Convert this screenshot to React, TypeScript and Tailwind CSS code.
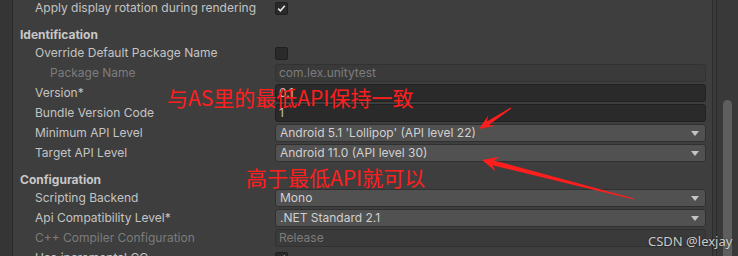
import React from 'react'

type Row =
  | { kind: 'header'; label: string }
  | { kind: 'check'; label: string; checked: boolean; indent?: boolean }
  | { kind: 'text'; label: string; value: string; dark?: boolean; disabled?: boolean; indent?: boolean }
  | { kind: 'select'; label: string; value: string; disabled?: boolean }

const rows: Row[] = [
  { kind: 'check', label: 'Apply display rotation during rendering', checked: true },
  { kind: 'header', label: 'Identification' },
  { kind: 'check', label: 'Override Default Package Name', checked: false },
  { kind: 'text', label: 'Package Name', value: 'com.lex.unitytest', disabled: true, indent: true },
  { kind: 'text', label: 'Version*', value: '0.1', dark: true },
  { kind: 'text', label: 'Bundle Version Code', value: '1', dark: true },
  { kind: 'select', label: 'Minimum API Level', value: "Android 5.1 'Lollipop' (API level 22)" },
  { kind: 'select', label: 'Target API Level', value: 'Android 11.0 (API level 30)' },
  { kind: 'header', label: 'Configuration' },
  { kind: 'select', label: 'Scripting Backend', value: 'Mono' },
  { kind: 'select', label: 'Api Compatibility Level*', value: '.NET Standard 2.1' },
  { kind: 'text', label: 'C++ Compiler Configuration', value: 'Release', disabled: true },
  { kind: 'check', label: 'Use incremental GC', checked: true },
]

const Checkbox = ({ checked }: { checked: boolean }) => (
  <div className="w-[13px] h-[13px] rounded-[2px] bg-[#2a2a2a] border border-[#1f1f1f] flex items-center justify-center">
    {checked && (
      <svg width="9" height="9" viewBox="0 0 9 9">
        <path d="M1.2 4.6 L3.4 6.8 L7.8 1.8" fill="none" stroke="#e8e8e8" strokeWidth="1.6" />
      </svg>
    )}
  </div>
)

// tapered arrow like a screenshot annotation tool
function arrow(tail: [number, number], tip: [number, number], headLen: number, headW: number, neckW: number) {
  const dx = tip[0] - tail[0]
  const dy = tip[1] - tail[1]
  const len = Math.hypot(dx, dy)
  const ux = dx / len
  const uy = dy / len
  const px = -uy
  const py = ux
  const at = (d: number, off: number) => [tip[0] - ux * d + px * off, tip[1] - uy * d + py * off]
  const neck = headLen * 0.72
  const pts = [
    [tail[0] + px * 0.6, tail[1] + py * 0.6],
    at(neck, neckW / 2),
    at(headLen, headW / 2),
    tip,
    at(headLen, -headW / 2),
    at(neck, -neckW / 2),
    [tail[0] - px * 0.6, tail[1] - py * 0.6],
  ]
  return pts.map(p => p.map(n => n.toFixed(1)).join(',')).join(' ')
}

export default function App() {
  return (
    <div className="relative w-[738px] h-[256px] overflow-hidden bg-[#3e3e3e] flex text-[12px] text-[#c4c4c4]" style={{ fontFamily: 'Inter, "Noto Sans", sans-serif' }}>
      <div className="w-[13px] shrink-0 bg-[#353535] border-r border-[#2a2a2a]" />

      <div className="w-[700px] shrink-0 border-r border-[#2c2c2c] pr-[6px]">
        <div className="-mt-[2px]">
          {rows.map((r, i) => {
            if (r.kind === 'header') {
              return (
                <div key={i} className="h-[25px] pt-[8px] pl-[7px]">
                  <div className="h-[17px] leading-[17px] font-bold text-[#c8c8c8]">{r.label}</div>
                </div>
              )
            }
            const disabled = (r.kind === 'text' || r.kind === 'select') && r.disabled
            const indent = (r.kind === 'text' || r.kind === 'check') && r.indent
            return (
              <div key={i} className="h-[20px] flex items-center">
                <div className={`w-[262px] shrink-0 whitespace-nowrap ${indent ? 'pl-[37px]' : 'pl-[22px]'} ${disabled ? 'text-[#7c7c7c]' : ''}`}>
                  {r.label}
                </div>
                <div className="flex-1 flex items-center">
                  {r.kind === 'check' && <Checkbox checked={r.checked} />}
                  {r.kind === 'text' && (
                    <div
                      className={`w-full h-[18px] rounded-[3px] border pl-[3px] leading-[16px] ${
                        r.dark ? 'bg-[#2a2a2a] border-[#212121]' : 'bg-[#3a3a3a] border-[#323232]'
                      } ${r.disabled ? 'text-[#7c7c7c]' : ''}`}
                    >
                      {r.value}
                    </div>
                  )}
                  {r.kind === 'select' && (
                    <div className="w-full h-[18px] rounded-[3px] border border-[#303030] bg-[#515151] pl-[4px] pr-[6px] flex items-center justify-between text-[#d0d0d0]">
                      <span className="leading-[16px]">{r.value}</span>
                      <svg width="8" height="5" viewBox="0 0 8 5">
                        <path d="M0 0 H8 L4 5 Z" fill="#c4c4c4" />
                      </svg>
                    </div>
                  )}
                </div>
              </div>
            )
          })}
        </div>
      </div>

      <div className="w-[4px] shrink-0 bg-[#3a3a3a] border-r border-[#2c2c2c]" />
      <div className="flex-1 bg-[#393939] pl-[6px] pt-[100px]">
        <div className="w-[9px] h-[200px] rounded-full bg-[#5e5e5e]" />
      </div>

      <svg className="absolute inset-0 pointer-events-none" width="738" height="256">
        <polygon points={arrow([511, 108], [479, 129], 15, 12, 4)} fill="#ff1e1e" />
        <polygon points={arrow([634, 199], [482, 160], 16, 15, 5)} fill="#ff1e1e" />
      </svg>

      <div
        className="absolute left-[167px] top-[86px] text-[21px] leading-[22px] text-[#ff1e1e] whitespace-nowrap"
        style={{ fontFamily: '"Noto Sans CJK SC", sans-serif' }}
      >
        与AS里的最低API保持一致
      </div>
      <div
        className="absolute left-[246px] top-[166px] text-[21px] leading-[22px] text-[#ff1e1e] whitespace-nowrap"
        style={{ fontFamily: '"Noto Sans CJK SC", sans-serif' }}
      >
        高于最低API就可以
      </div>

      <div
        className="absolute left-[648px] top-[233px] text-[13px] leading-[16px] text-white/75 whitespace-nowrap [text-shadow:0_0_2px_rgba(0,0,0,0.5)]"
        style={{ fontFamily: '"Noto Sans", "Noto Sans CJK SC", sans-serif' }}
      >
        CSDN @lexjay
      </div>
    </div>
  )
}
